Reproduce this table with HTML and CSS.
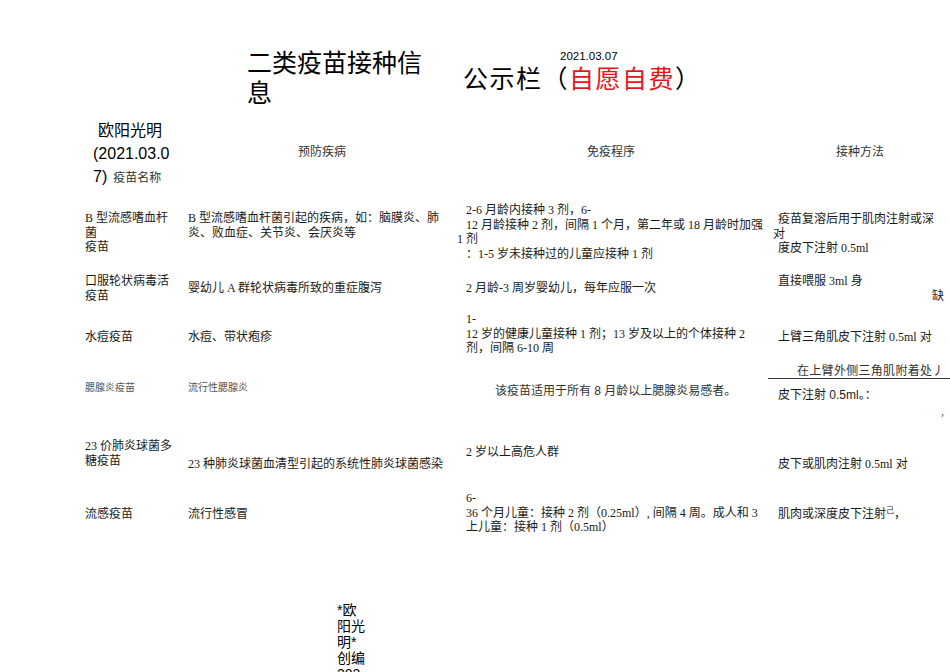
FILE: index.html
```html
<!DOCTYPE html>
<html lang="zh">
<head>
<meta charset="utf-8">
<title>二类疫苗接种信息公示栏</title>
<link rel="stylesheet" href="styles.css">
</head>
<body>
<div class="page">
  <div class="title-row">
    <div class="title-left">二类疫苗接种信息</div>
    <div class="title-right">
      <div class="date">2021.03.07</div>
      <div class="board">公示栏（<span class="red">自愿自费</span>）</div>
    </div>
  </div>

  <div class="row head">
    <div class="c1">
      <div class="author">欧阳光明</div>
      <div class="authdate">(2021.03.0</div>
      <div class="authdate">7)<span class="hlabel">疫苗名称</span></div>
    </div>
    <div class="c2 hcenter"><span class="hlabel">预防疾病</span></div>
    <div class="c3 hcenter"><span class="hlabel">免疫程序</span></div>
    <div class="c4 hcenter"><span class="hlabel">接种方法</span></div>
  </div>

  <div class="row r1">
    <div class="c1 pt11">B 型流感嗜血杆<br>菌<br>疫苗</div>
    <div class="c2 pt11">B 型流感嗜血杆菌引起的疾病，如：脑膜炎、肺<br>炎、败血症、关节炎、会厌炎等</div>
    <div class="c3 pt3">
      <div class="in">2-6 月龄内接种 3 剂，6-</div>
      <div class="in">12 月龄接种 2 剂，间隔 1 个月，第二年或 18 月龄时加强</div>
      <div>1 剂</div>
      <div class="in">：1-5 岁未接种过的儿童应接种 1 剂</div>
    </div>
    <div class="c4 pt12">
      <div class="in">疫苗复溶后用于肌肉注射或深</div>
      <div class="in5">对</div>
      <div class="in">度皮下注射 0.5ml</div>
    </div>
  </div>

  <div class="row r2">
    <div class="c1 pt4">口服轮状病毒活<br>疫苗</div>
    <div class="c2 pt11">婴幼儿 A 群轮状病毒所致的重症腹泻</div>
    <div class="c3 pt11"><div class="in">2 月龄-3 周岁婴幼儿，每年应服一次</div></div>
    <div class="c4 pt4">
      <div class="in">直接喂服 3ml 身</div>
      <div class="right">缺</div>
    </div>
  </div>

  <div class="row r3">
    <div class="c1 pt18">水痘疫苗</div>
    <div class="c2 pt18">水痘、带状疱疹</div>
    <div class="c3 pt0">
      <div class="in">1-</div>
      <div class="in">12 岁的健康儿童接种 1 剂；13 岁及以上的个体接种 2</div>
      <div class="in">剂，间隔 6-10 周</div>
    </div>
    <div class="c4 pt18"><div class="in">上臂三角肌皮下注射 0.5ml 对</div></div>
  </div>

  <div class="row r4">
    <div class="c1 pt17 small">腮腺炎疫苗</div>
    <div class="c2 pt17 small">流行性腮腺炎</div>
    <div class="c3 pt20"><div class="in38 sans">该疫苗适用于所有 8 月龄以上腮腺炎易感者。</div></div>
    <div class="c4 pt0">
      <div class="uline">在上臂外侧三角肌附着处丿</div>
      <div class="in sans pt9">皮下注射 0.5ml。：</div>
      <div class="right dot">,</div>
    </div>
  </div>

  <div class="row r5">
    <div class="c1 pt9">23 价肺炎球菌多<br>糖疫苗</div>
    <div class="c2 pt27">23 种肺炎球菌血清型引起的系统性肺炎球菌感染</div>
    <div class="c3 pt15"><div class="in">2 岁以上高危人群</div></div>
    <div class="c4 pt27"><div class="in">皮下或肌肉注射 0.5ml 对</div></div>
  </div>

  <div class="row r6">
    <div class="c1 pt17">流感疫苗</div>
    <div class="c2 pt17">流行性感冒</div>
    <div class="c3 pt1">
      <div class="in">6-</div>
      <div class="in">36 个月儿童：接种 2 剂（0.25ml）, 间隔 4 周。成人和 3</div>
      <div class="in">上儿童：接种 1 剂（0.5ml）</div>
    </div>
    <div class="c4 pt17"><div class="in">肌肉或深度皮下注射<sup class="sup">己</sup>，</div></div>
  </div>

  <div class="footer">*欧阳光明*创编2021</div>
</div>
</body>
</html>
```

FILE: styles.css
```css
html, body {
  margin: 0;
  padding: 0;
  background: #fff;
}
body {
  font-family: "Liberation Serif", "Noto Sans CJK SC", serif;
  font-size: 12px;
  line-height: 14.5px;
  color: #1a1a1a;
}
.page {
  width: 950px;
  height: 672px;
  overflow: hidden;
}
.title-row {
  display: flex;
  height: 115px;
}
.title-left {
  margin-left: 247px;
  width: 182px;
  padding-top: 48px;
  font-family: "Liberation Sans", "Noto Sans CJK SC", sans-serif;
  font-size: 25px;
  line-height: 30px;
  color: #000;
}
.title-right {
  margin-left: 34px;
  padding-top: 49px;
  font-family: "Liberation Sans", "Noto Sans CJK SC", sans-serif;
  color: #000;
}
.date {
  margin-left: 97px;
  font-size: 11.5px;
  line-height: 14px;
}
.board {
  font-size: 25px;
  line-height: 30px;
  letter-spacing: 1.5px;
  margin-top: 1px;
}
.red { color: #e8141b; }

.row {
  display: grid;
  grid-template-columns: 85px 103px 269px 311px 182px;
}
.row > .c1 { grid-column: 2; }
.row > .c2 { grid-column: 3; }
.row > .c3 { grid-column: 4; }
.row > .c4 { grid-column: 5; }
.row > div { white-space: nowrap; }

.head { height: 85px; }
.head .c1 {
  font-family: "Liberation Sans", "Noto Sans CJK SC", sans-serif;
  color: #000;
}
.author {
  margin-left: 13px;
  padding-top: 5px;
  font-size: 16px;
  line-height: 22px;
}
.authdate {
  margin-left: 8px;
  font-size: 16px;
  line-height: 23px;
}
.hlabel {
  font-family: "Liberation Serif", "Noto Sans CJK SC", serif;
  font-size: 12px;
  color: #333;
  margin-left: 6px;
}
.hcenter { padding-top: 30px; }
.head .c2 { padding-left: 104px; }
.head .c3 { padding-left: 124px; }
.head .c4 { padding-left: 62px; }

.r1 { height: 70px; }
.r2 { height: 42px; }
.r3 { height: 52px; }
.r4 { height: 66px; }
.r5 { height: 60px; }
.r6 { height: 60px; }

.pt0 { padding-top: 0; }
.pt1 { padding-top: 1px; }
.pt3 { padding-top: 3px; }
.pt4 { padding-top: 4px; }
.pt9 { padding-top: 9px; }
.pt11 { padding-top: 11px; }
.pt12 { padding-top: 12px; }
.pt15 { padding-top: 15px; }
.pt17 { padding-top: 17px; }
.pt18 { padding-top: 18px; }
.pt20 { padding-top: 20px; }
.pt27 { padding-top: 27px; }

.in { padding-left: 9px; }
.c4 .in { padding-left: 10px; }
.in5 { padding-left: 5px; }
.in38 { padding-left: 38px; }
.right { text-align: right; padding-right: 6px; }
.dot { line-height: 12px; margin-top: 2px; color: #666; }

.small {
  font-size: 10px;
  color: #555;
}
.sans {
  font-family: "Liberation Sans", "Noto Sans CJK SC", sans-serif;
}
.c3 .sans { color: #333; }
.uline {
  padding-left: 29px;
  border-bottom: 1px solid #333;
  line-height: 14px;
  color: #333;
  letter-spacing: 0.3px;
}
.sup {
  font-size: 8px;
  line-height: 0;
}
.footer {
  margin-left: 337px;
  margin-top: 52px;
  width: 30px;
  font-family: "Liberation Sans", "Noto Sans CJK SC", sans-serif;
  font-size: 14px;
  line-height: 16px;
  color: #000;
  word-break: break-all;
}
```
